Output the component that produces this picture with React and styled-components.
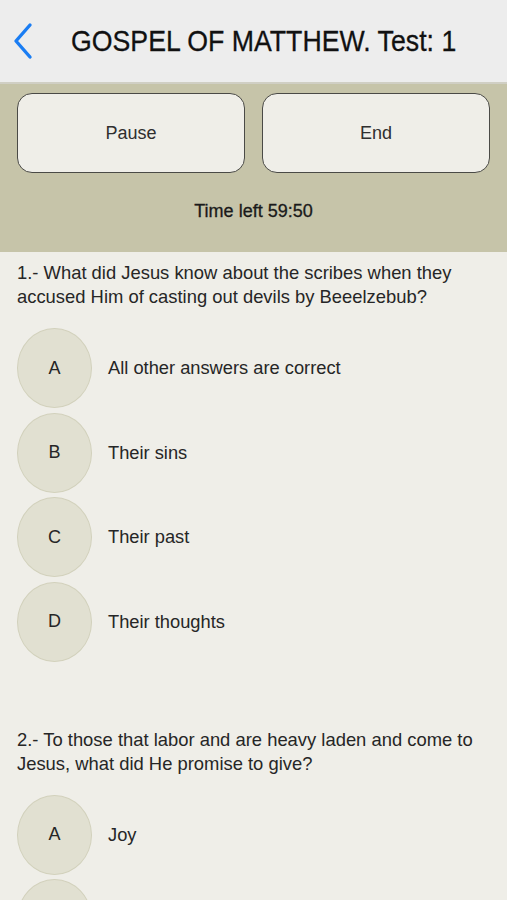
import styled, { createGlobalStyle } from "styled-components"

const GlobalStyle = createGlobalStyle`
    html, body {
        margin: 0;
        padding: 0;
        background: #efeee8;
    }
    body {
        font-family: "Liberation Sans", Arial, sans-serif;
        overflow: hidden;
    }
    * {
        box-sizing: border-box;
    }
`

const questions = [
    {
        id: 1,
        text: "What did Jesus know about the scribes when they accused Him of casting out devils by Beeelzebub?",
        options: ["All other answers are correct", "Their sins", "Their past", "Their thoughts"],
    },
    {
        id: 2,
        text: "To those that labor and are heavy laden and come to Jesus, what did He promise to give?",
        options: ["Joy", "Rest", "Peace", "Love"],
    },
]

const letters = ["A", "B", "C", "D"]

const BackIcon = () => (
    <svg width="22" height="38" viewBox="0 0 22 38">
        <path d="M18 3 L4 19 L18 35" fill="none" stroke="#1a7df3" strokeWidth="3.4" strokeLinecap="round" strokeLinejoin="round" />
    </svg>
)

const App = () => {
    return (
        <>
            <GlobalStyle />
            <Page>
                <Header>
                    <BackButton><BackIcon /></BackButton>
                    <Title>GOSPEL OF MATTHEW. Test: 1</Title>
                </Header>

                <Controls>
                    <ButtonRow>
                        <ControlButton>Pause</ControlButton>
                        <ControlButton>End</ControlButton>
                    </ButtonRow>
                    <TimeLeft>Time left 59:50</TimeLeft>
                </Controls>

                {questions.map((q) => (
                    <Question key={q.id}>
                        <QuestionText>{q.id}.- {q.text}</QuestionText>
                        <Options>
                            {q.options.map((opt, i) => (
                                <Option key={opt}>
                                    <Bubble>{letters[i]}</Bubble>
                                    <OptionText>{opt}</OptionText>
                                </Option>
                            ))}
                        </Options>
                    </Question>
                ))}
            </Page>
        </>
    )
}

export default App

const Page = styled.div`
    width: 507px;
    height: 900px;
    overflow: hidden;
    background: #efeee8;
`

const Header = styled.div`
    height: 84px;
    display: flex;
    align-items: center;
    padding-left: 12px;

    background: #ededed;
    border-bottom: 2px solid #d0cfc4;
`

const BackButton = styled.div`
    display: flex;
    align-items: center;
    margin-top: -1px;
`

const Title = styled.div`
    margin-left: 37px;

    color: #111;
    font-size: 30px;
    -webkit-text-stroke: 0.3px #111;
    white-space: nowrap;
    transform: scaleX(0.89);
    transform-origin: left center;
`

const Controls = styled.div`
    height: 168px;
    padding: 9px 17px 0;

    background: #c6c4a9;
`

const ButtonRow = styled.div`
    display: grid;
    grid-template-columns: 1fr 1fr;
    gap: 17px;
`

const ControlButton = styled.div`
    height: 80px;
    display: flex;
    align-items: center;
    justify-content: center;

    background: #efeee8;
    border: 1.5px solid #4a4a46;
    border-radius: 15px;

    color: #2f2f2f;
    font-size: 18px;
`

const TimeLeft = styled.div`
    margin-top: 28px;

    text-align: center;
    color: #1a1a1a;
    font-size: 18px;
    -webkit-text-stroke: 0.3px #1a1a1a;
`

const Question = styled.div`
    padding: 9px 17px 0;

    & + & {
        padding-top: 66px;
    }
`

const QuestionText = styled.div`
    color: #262626;
    font-size: 18.4px;
    line-height: 24px;
`

const Options = styled.div`
    margin-top: 19px;
    display: flex;
    flex-direction: column;
    gap: 4.5px;
`

const Option = styled.div`
    display: flex;
    align-items: center;
`

const Bubble = styled.div`
    width: 75px;
    height: 80px;
    flex-shrink: 0;
    display: flex;
    align-items: center;
    justify-content: center;

    background: #e1e0d1;
    border: 1.5px solid #d2d1bc;
    border-radius: 50%;

    color: #262626;
    font-size: 18px;
`

const OptionText = styled.div`
    margin-left: 16px;

    color: #262626;
    font-size: 18.3px;
`
